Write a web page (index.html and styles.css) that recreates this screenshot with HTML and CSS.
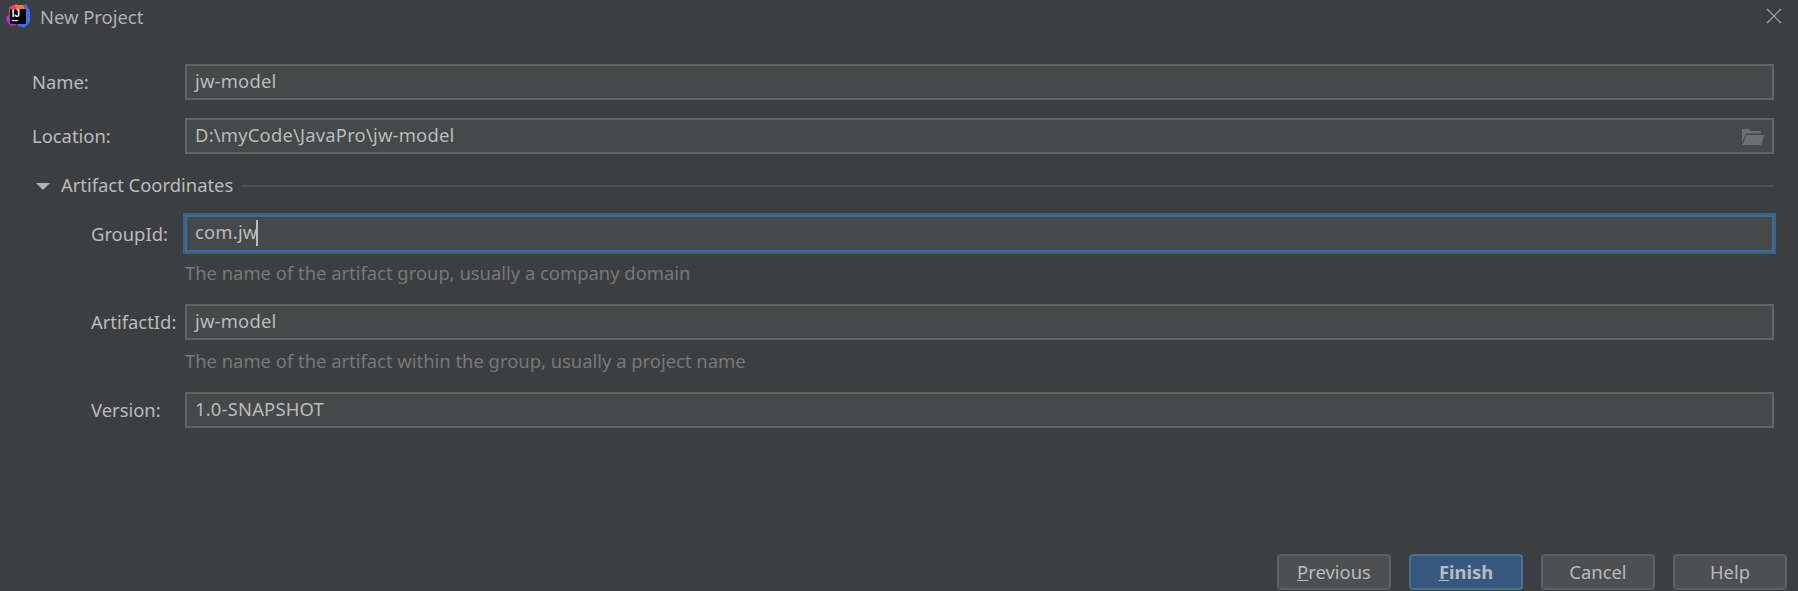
FILE: index.html
```html
<!DOCTYPE html>
<html lang="en">
<head>
<meta charset="utf-8">
<title>New Project</title>
<link rel="stylesheet" href="styles.css">
</head>
<body>
<div class="dialog">
  <header class="titlebar">
    <svg class="logo" width="24" height="24" viewBox="0 0 24 24">
      <path d="M3 3 L10 0 L16 3 L12 14 L3 12 Z" fill="#fc2f6d"/>
      <path d="M13 3 L20 0 L24 7 L24 18 L18 24 L11 21 Z" fill="#3f6ff0"/>
      <path d="M0 13 L7 8 L10 21 L5 22 L1 18 Z" fill="#b030c0"/>
      <path d="M9 1 L17 1 L19 5 L9 5 Z" fill="#f97a2c"/>
      <rect x="4" y="5" width="16" height="15" fill="#000"/>
      <rect x="6" y="16" width="6" height="1.2" fill="#ddd"/>
      <text class="logo-text" x="5.8" y="13.4">IJ</text>
    </svg>
    <span class="title">New Project</span>
    <svg class="close" width="16" height="16" viewBox="0 0 16 16"><path d="M1 1 L15 15 M15 1 L1 15" stroke="#a8a8a8" stroke-width="1.2" fill="none"/></svg>
  </header>

  <main class="form">
    <div class="row">
      <label class="label">Name:</label>
      <div class="input">jw-model</div>
    </div>
    <div class="row row-location">
      <label class="label">Location:</label>
      <div class="input input-icon">
        <span>D:\myCode\JavaPro\jw-model</span>
        <svg class="folder" width="24" height="18" viewBox="0 0 24 18">
          <path d="M1 1 H8 L10 3 H20 V5.5 H5 L1 15 Z" fill="#6a7173"/>
          <path d="M5.5 7 H23.5 L20 17 H1.5 Z" fill="#6a7173"/>
        </svg>
      </div>
    </div>
    <div class="section">
      <span class="triangle"></span>
      <span class="section-title">Artifact Coordinates</span>
      <span class="section-line"></span>
    </div>
    <div class="group">
      <div class="row row-group">
        <label class="label label-sub">GroupId:</label>
        <div class="input input-focus"><span>com.jw</span><span class="caret"></span></div>
      </div>
      <div class="hint">The name of the artifact group, usually a company domain</div>
      <div class="row row-next">
        <label class="label label-sub">ArtifactId:</label>
        <div class="input">jw-model</div>
      </div>
      <div class="hint">The name of the artifact within the group, usually a project name</div>
      <div class="row row-next">
        <label class="label label-sub">Version:</label>
        <div class="input">1.0-SNAPSHOT</div>
      </div>
    </div>
  </main>

  <footer class="buttons">
    <button class="btn"><u>P</u>revious</button>
    <button class="btn btn-primary"><u>F</u>inish</button>
    <button class="btn">Cancel</button>
    <button class="btn">Help</button>
  </footer>
</div>
</body>
</html>
```
FILE: styles.css
```css
* { box-sizing: border-box; }
html, body { margin: 0; padding: 0; height: 100%; }
body {
  background: #3c3f41;
  color: #bbbbbb;
  font-family: "Noto Sans", "Open Sans", sans-serif;
  font-size: 18.4px;
  overflow: hidden;
}
.dialog { width: 1798px; height: 591px; display: flex; flex-direction: column; }
.titlebar { height: 32px; display: flex; align-items: center; padding: 0 16px 0 6px; }
.logo { flex: none; }
.logo-text { font-family: "Liberation Sans", sans-serif; font-size: 10px; font-weight: 700; fill: #fff; }
.title { margin-left: 10px; color: #afb1b3; }
.close { margin-left: auto; }
.form { padding: 32px 24px 0 32px; flex: 1; }
.row { display: flex; align-items: center; height: 36px; }
.row-location { margin-top: 18px; }
.label { width: 153px; flex: none; padding-bottom: 1px; color: #bbbbbb; }
.input {
  flex: 1;
  height: 100%;
  background: #45494a;
  border: 2px solid #646464;
  padding: 0 8px 2px;
  display: flex;
  align-items: center;
  color: #bbbbbb;
  letter-spacing: 0.2px;
  line-height: 1;
}
.input-icon { justify-content: space-between; }
.folder { flex: none; margin: 3px -1px 0 0; }
.section { display: flex; align-items: center; height: 24px; margin-top: 20px; }
.triangle { width: 0; height: 0; margin-left: 4px; border-left: 7px solid transparent; border-right: 7px solid transparent; border-top: 7px solid #afb1b3; }
.section-title { margin-left: 11px; padding-bottom: 3px; }
.section-line { flex: 1; height: 2px; background: #515151; margin-left: 8px; }
.group { padding-left: 59px; }
.label-sub { width: 94px; }
.row-group { margin-top: 17px; height: 37px; }
.input-focus { border-color: #3f6a94; box-shadow: 0 0 0 2px #3d6185; }
.caret { width: 2px; height: 26px; background: #bbbbbb; margin-left: -1px; }
.hint { margin: 9px 0 0 94px; height: 24px; line-height: 24px; color: #787878; }
.row-next { margin-top: 19px; }
.buttons { display: flex; justify-content: flex-end; gap: 18px; padding: 0 11px 1px 0; }
.btn {
  width: 114px;
  height: 36px;
  background: #4c5052;
  border: 2px solid #5e6060;
  border-radius: 4px;
  color: #bbbbbb;
  font: inherit;
  padding: 0 0 2px;
}
.btn-primary { background: #365880; border-color: #4c708c; font-weight: 700; }
```
